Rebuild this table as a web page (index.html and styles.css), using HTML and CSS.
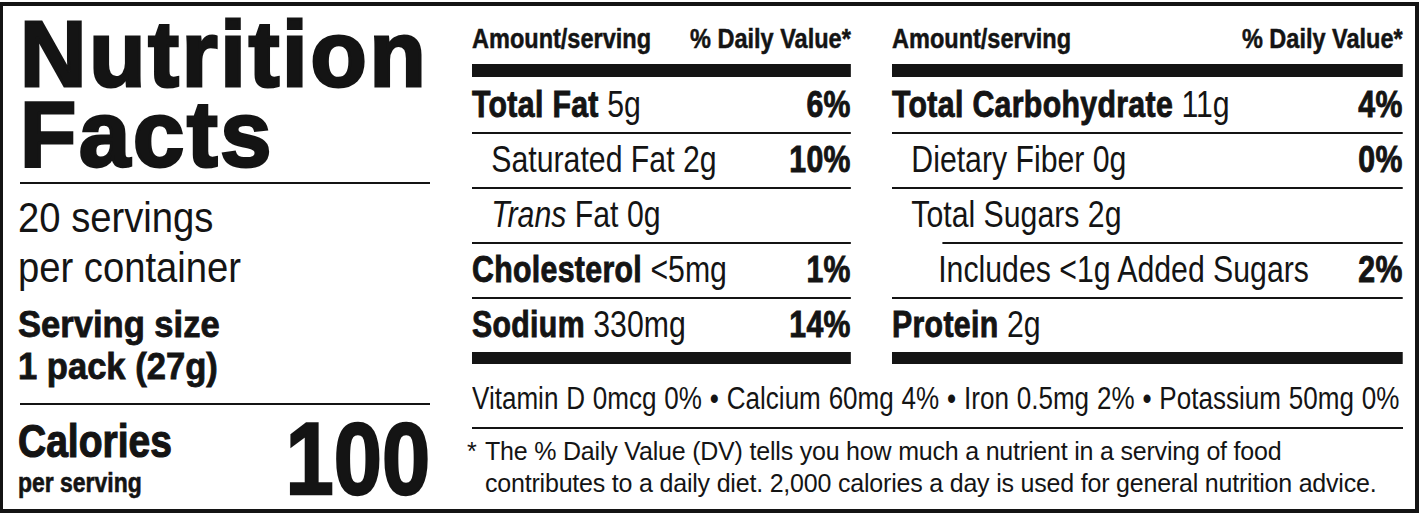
FILE: index.html
```html
<!DOCTYPE html>
<html lang="en">
<head>
<meta charset="utf-8">
<title>Nutrition Facts</title>
<link rel="stylesheet" href="styles.css">
</head>
<body>
<div class="nf">
  <div class="left">
    <div class="title">Nutrition<br>Facts</div>
    <div class="hr"></div>
    <div class="servings">20 servings<br>per container</div>
    <div class="size">Serving size<br>1 pack (27g)</div>
    <div class="hr hr-cal"></div>
    <div class="cal">
      <div class="cal-l">
        <div class="cal-name">Calories</div>
        <div class="cal-per">per serving</div>
      </div>
      <div class="cal-num">100</div>
    </div>
  </div>
  <div class="main">
    <div class="cols">
      <div class="col col-a">
        <div class="hdr"><span>Amount/serving</span><span>% Daily Value*</span></div>
        <div class="bar"></div>
        <div class="row first"><span><b class="b">Total Fat</b> 5g</span><b class="b">6%</b></div>
        <div class="rule"></div>
        <div class="row"><span class="ind">Saturated Fat 2g</span><b class="b">10%</b></div>
        <div class="rule"></div>
        <div class="row"><span class="ind"><i>Trans</i> Fat 0g</span></div>
        <div class="rule"></div>
        <div class="row"><span><b class="b">Cholesterol</b> &lt;5mg</span><b class="b">1%</b></div>
        <div class="rule"></div>
        <div class="row"><span><b class="b">Sodium</b> 330mg</span><b class="b">14%</b></div>
        <div class="bar bar-end"></div>
      </div>
      <div class="col col-b">
        <div class="hdr"><span>Amount/serving</span><span>% Daily Value*</span></div>
        <div class="bar"></div>
        <div class="row first"><span><b class="b">Total Carbohydrate</b> 11g</span><b class="b">4%</b></div>
        <div class="rule"></div>
        <div class="row"><span class="ind">Dietary Fiber 0g</span><b class="b">0%</b></div>
        <div class="rule"></div>
        <div class="row"><span class="ind">Total Sugars 2g</span></div>
        <div class="rule rule-in"></div>
        <div class="row"><span class="ind2">Includes &lt;1g Added Sugars</span><b class="b">2%</b></div>
        <div class="rule"></div>
        <div class="row"><span><b class="b">Protein</b> 2g</span></div>
        <div class="bar bar-end"></div>
      </div>
    </div>
    <div class="vit">Vitamin D 0mcg 0% • Calcium 60mg 4% • Iron 0.5mg 2% • Potassium 50mg 0%</div>
    <div class="rule"></div>
    <div class="foot">
      <span class="ast">*</span>
      <span class="foot-t">The % Daily Value (DV) tells you how much a nutrient in a serving of food<br>contributes to a daily diet. 2,000 calories a day is used for general nutrition advice.</span>
    </div>
  </div>
</div>
</body>
</html>
```

FILE: styles.css
```css
html, body {
  margin: 0;
  padding: 0;
  background: #ffffff;
}

.nf {
  display: flex;
  margin-top: 2px;
  width: 1419px;
  height: 511px;
  box-sizing: border-box;
  border: 4px solid #141414;
  border-left-width: 3px;
  padding: 0 12px 0 15px;
  color: #141414;
  font-family: "Liberation Sans", Arial, sans-serif;
  overflow: hidden;
}

/* ---------- left column ---------- */

.left {
  width: 412px;
  flex: none;
  padding-top: 8px;
}

.title {
  font-weight: 700;
  font-size: 92px;
  line-height: 80px;
  letter-spacing: 2.8px;
  -webkit-text-stroke: 3px #141414;
  margin: 0 0 8px 2px;
}

.hr {
  height: 2px;
  background: #141414;
  margin-left: 2px;
}

.servings {
  margin-top: 9px;
  font-size: 42px;
  line-height: 50px;
  transform: scaleX(0.91);
  transform-origin: 0 0;
}

.size {
  margin-top: 11px;
  font-weight: 700;
  font-size: 36px;
  line-height: 42px;
  -webkit-text-stroke: 0.8px #141414;
  transform: scaleX(0.96);
  transform-origin: 0 0;
}

.hr-cal {
  margin-top: 15px;
}

.cal {
  display: flex;
  justify-content: space-between;
  align-items: flex-start;
  margin-top: 12px;
}

.cal-name {
  font-weight: 700;
  font-size: 47px;
  line-height: 48px;
  -webkit-text-stroke: 1.2px #141414;
  transform: scaleX(0.83);
  transform-origin: 0 0;
}

.cal-per {
  margin-top: 3px;
  font-weight: 700;
  font-size: 27px;
  line-height: 30px;
  -webkit-text-stroke: 0.6px #141414;
  transform: scaleX(0.85);
  transform-origin: 0 0;
}

.cal-num {
  margin-top: -16px;
  font-weight: 700;
  font-size: 102px;
  line-height: normal;
  -webkit-text-stroke: 2.4px #141414;
  transform: scaleX(0.85);
  transform-origin: 100% 0;
}

/* ---------- main area ---------- */

.main {
  width: 931px;
  flex: none;
  margin-left: 42px;
  padding-top: 16px;
}

/* condensed layout: laid out 1/0.84 wider, then squeezed */
.cols {
  display: flex;
  gap: 49px;
  width: 1108px;
  transform: scaleX(0.84);
  transform-origin: 0 0;
}

.col {
  flex: none;
}

.col-a {
  width: 451px;
}

.col-b {
  width: 608px;
}

.hdr {
  display: flex;
  justify-content: space-between;
  font-weight: 700;
  font-size: 28px;
  line-height: 34px;
  -webkit-text-stroke: 0.5px #141414;
}

.bar {
  height: 13px;
  margin-top: 8px;
  background: #141414;
}

.bar-end {
  height: 12px;
  margin-top: 0;
}

.row {
  display: flex;
  justify-content: space-between;
  height: 53px;
  line-height: 52px;
  font-size: 36px;
  white-space: nowrap;
}

.row.first {
  height: 55px;
  line-height: 55px;
}

.b {
  font-weight: 700;
  letter-spacing: 0.4px;
  -webkit-text-stroke: 0.9px #141414;
}

.ind {
  padding-left: 23px;
}

.ind2 {
  padding-left: 55px;
}

.rule {
  height: 2px;
  background: #141414;
}

.rule-in {
  margin-left: 60px;
}

.vit {
  width: 1104px;
  margin-top: 15px;
  margin-bottom: 8px;
  font-size: 31px;
  line-height: 40px;
  text-align: justify;
  text-align-last: justify;
  transform: scaleX(0.84);
  transform-origin: 0 0;
}

.foot {
  display: flex;
  margin-top: 6px;
  margin-left: -5px;
  font-size: 25px;
  line-height: 32px;
  letter-spacing: -0.2px;
}

.ast {
  width: 18px;
  flex: none;
}
```
